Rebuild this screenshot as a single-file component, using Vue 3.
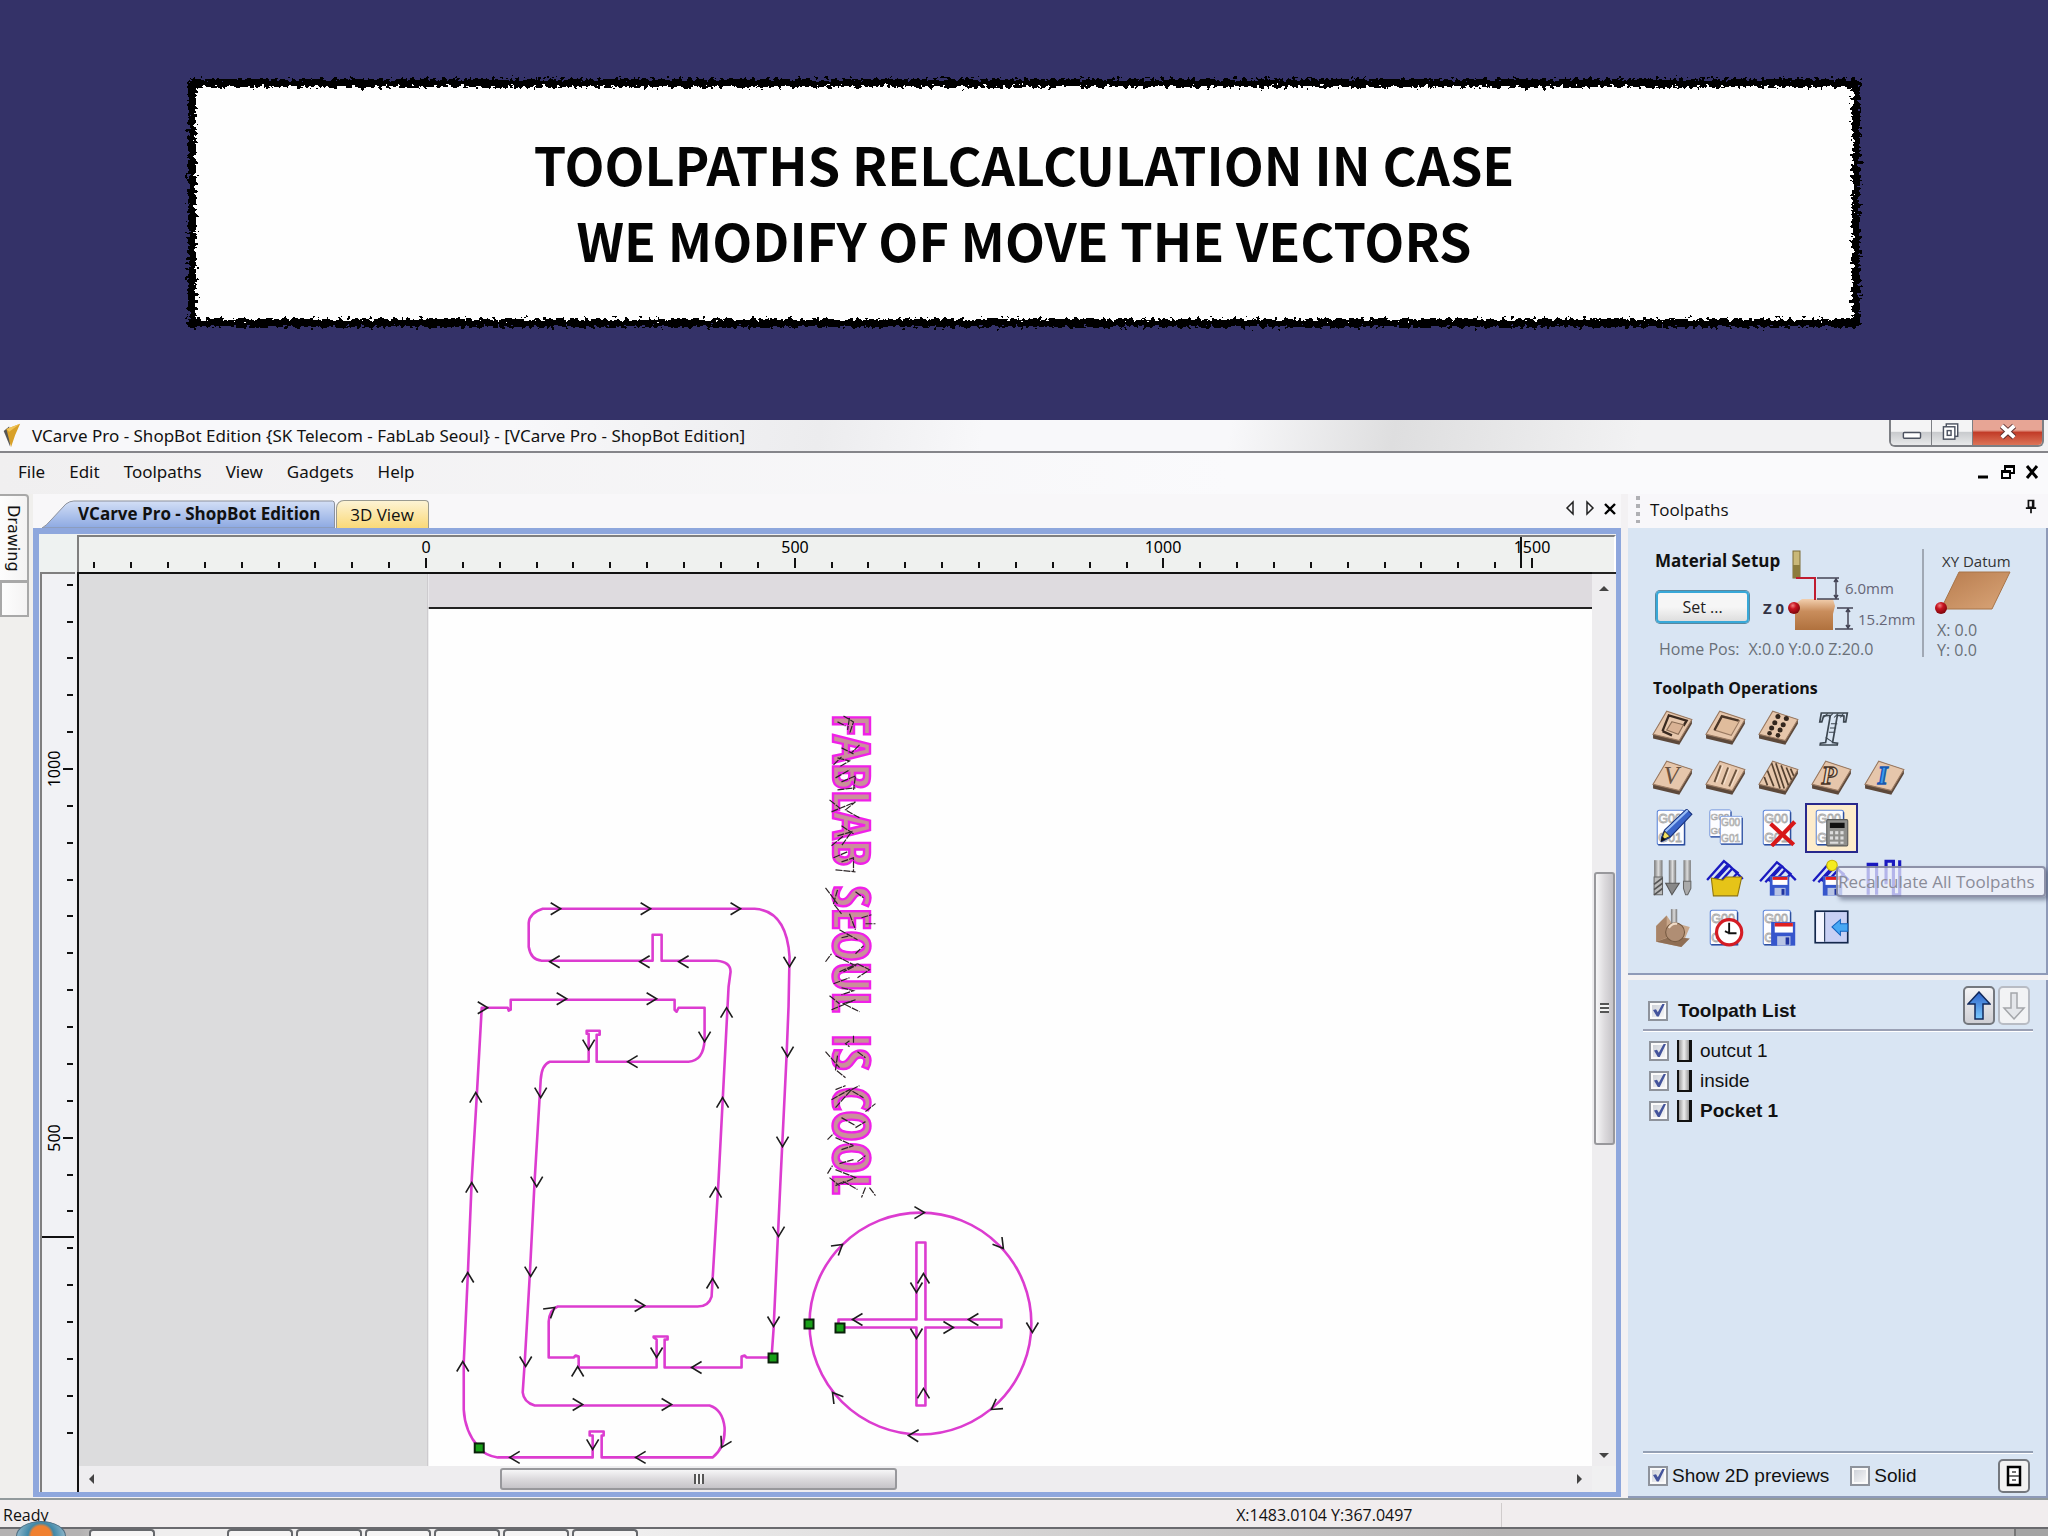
<script setup>
const menus = ['File', 'Edit', 'Toolpaths', 'View', 'Gadgets', 'Help']

const STEP = 36.87
const hTicks = Array.from({ length: 40 }, (_, i) => {
  const n = i - 9
  return { x: Math.round(349 + n * STEP), major: n % 10 === 0, label: n % 10 === 0 ? n * 50 : '' }
})
const vTicks = Array.from({ length: 24 }, (_, i) => {
  const n = 25 - i
  return { y: Math.round(196 + (20 - n) * STEP), major: n % 10 === 0, label: n % 10 === 0 ? n * 50 : '' }
})

const arrows = [
  [561, 909, 0], [651, 909, 0], [741, 909, 0], [488, 1008, 0], [567, 999, 0], [657, 999, 0],
  [645, 1306, 0], [583, 1405, 0], [672, 1405, 0],
  [550, 962, 180], [640, 962, 180], [679, 962, 180], [628, 1062, 180], [692, 1368, 180], [636, 1458, 180], [510, 1458, 180],
  [790, 967, 90], [788, 1057, 90], [783, 1147, 90], [705, 1042, 90], [589, 1050, 90], [541, 1098, 90],
  [537, 1187, 90], [531, 1277, 90], [526, 1367, 90], [779, 1237, 90], [774, 1327, 90], [657, 1358, 90],
  [593, 1450, 90], [722, 1448, 118],
  [476, 1093, -90], [727, 1008, -90], [723, 1098, -90], [472, 1183, -90], [468, 1273, -90], [463, 1362, -90],
  [716, 1188, -90], [713, 1279, -90], [578, 1367, -90], [555, 1308, -38],
  [925, 1213, 0], [1004, 1249, 52], [1033, 1333, 90], [992, 1410, 145], [909, 1436, 182], [833, 1393, -128], [843, 1245, -38],
  [917, 1293, 90], [924, 1274, -90], [853, 1320, 180], [969, 1320, 180], [954, 1328, 0], [917, 1339, 90], [924, 1389, -90],
]
const starts = [[773, 1358], [479, 1448], [809, 1324], [840, 1328]]

const words = [
  { t: 'FABLAB', y: 714 },
  { t: 'SEOUL', y: 886 },
  { t: 'IS', y: 1033 },
  { t: 'COOL', y: 1087 },
]

const items = [
  { name: 'outcut 1', bold: false },
  { name: 'inside', bold: false },
  { name: 'Pocket 1', bold: true },
]
const ops = [
  [['profile', 'Profile'], ['pocket', 'Pocket'], ['drill', 'Drilling'], ['quick', 'Quick Engrave']],
  [['vcarve', 'V-Carve'], ['flute', 'Fluting'], ['texture', 'Texture'], ['prism', 'Prism Carving'], ['inlay', 'Inlay']],
  [['edit', 'Edit Toolpath'], ['copy', 'Duplicate Toolpath'], ['delete', 'Delete Toolpath'], ['recalc', 'Recalculate All']],
  [['tools', 'Tool Database'], ['open', 'Load Template'], ['save', 'Save Template'], ['saveall', 'Save All as Template'], ['merge', 'Merge Toolpaths']],
  [['preview', 'Preview'], ['time', 'Estimate Time'], ['output', 'Save Toolpath'], ['switch', 'Switch to Drawing Tab']],
]
const taskButtons = [89, 227, 296, 365, 434, 503, 572]
</script>

<template>
  <div class="slide">
    <svg class="defs" width="0" height="0" aria-hidden="true">
      <defs>
        <filter id="rough" x="-2%" y="-8%" width="104%" height="116%">
          <feTurbulence type="fractalNoise" baseFrequency="0.22 0.28" numOctaves="2" seed="7" result="n" />
          <feDisplacementMap in="SourceGraphic" in2="n" scale="11" xChannelSelector="R" yChannelSelector="G" />
        </filter>
        <linearGradient id="wood" x1="0" y1="0" x2="1" y2="1">
          <stop offset="0" stop-color="#b87c4e" /><stop offset="1" stop-color="#d9a578" />
        </linearGradient>
        <radialGradient id="ball" cx="0.4" cy="0.3" r="0.7">
          <stop offset="0" stop-color="#f08080" /><stop offset="0.4" stop-color="#c81420" /><stop offset="1" stop-color="#7c060c" />
        </radialGradient>
        <linearGradient id="blueArrow" x1="0" y1="0" x2="0" y2="1">
          <stop offset="0" stop-color="#2c62c8" /><stop offset="1" stop-color="#7ccaff" />
        </linearGradient>
        <linearGradient id="steel" x1="0" y1="0" x2="1" y2="0">
          <stop offset="0" stop-color="#777" /><stop offset="0.5" stop-color="#ddd" /><stop offset="1" stop-color="#777" />
        </linearGradient>
        <symbol id="board" viewBox="0 0 40 36">
          <path d="M1 24 L14 2 L38 10 L38 14 L26 34 L1 28Z" fill="#5c483a" />
          <path d="M1 24 L14 2 L38 10 L26 30Z" fill="#e6c6ab" stroke="#9a7a62" stroke-width="1" />
        </symbol>
        <symbol id="sheet" viewBox="0 0 40 36">
          <rect x="5" y="1" width="26" height="33" rx="2" fill="#fdfdff" stroke="#5f86d8" />
          <path d="M31 3V34H6" fill="none" stroke="#2d4f9e" stroke-width="1.4" />
          <text x="6" y="13" font-size="12" fill="#fff" stroke="#aaa" stroke-width="0.8" font-family="Liberation Sans, sans-serif">G00</text>
          <text x="6" y="31" font-size="12" fill="#fff" stroke="#aaa" stroke-width="0.8" font-family="Liberation Sans, sans-serif">G01</text>
        </symbol>
        <symbol id="floppy" viewBox="0 0 20 20">
          <rect x="0" y="0" width="20" height="20" fill="#3656cc" />
          <rect x="3" y="1" width="15" height="8" fill="#fff" /><rect x="3" y="1" width="15" height="3" fill="#e02020" />
          <rect x="5" y="12" width="11" height="8" fill="#b8c4e4" /><rect x="12" y="13" width="3" height="6" fill="#2034a0" />
        </symbol>
        <symbol id="paths" viewBox="0 0 40 24">
          <path d="M2 20L18 2L23 6L10 20M16 20L26 9L31 13L25 20M23 6L36 19M7 21L21 6" fill="none" stroke="#1a1ac0" stroke-width="2.2" />
        </symbol>
        <symbol id="i-profile" viewBox="0 0 40 36"><use href="#board" /><path d="M10 21 L16 6 L33 11 L30 16 M10 21 L19 25" fill="none" stroke="#3a2a20" stroke-width="2.2" /><path d="M19 12 L30 15 L25 24 L14 20Z" fill="#d9b294" stroke="#8a6c54" /></symbol>
        <symbol id="i-pocket" viewBox="0 0 40 36"><use href="#board" /><path d="M9 20 L16 6 L33 11 L25 25Z" fill="#e0bc9c" stroke="#9a7a62" /><path d="M9 20 L16 7 L32 11" fill="none" stroke="#4a3628" stroke-width="2.2" /></symbol>
        <symbol id="i-drill" viewBox="0 0 40 36"><use href="#board" /><g fill="#33261d"><circle cx="19" cy="7" r="2.4" /><circle cx="27" cy="9" r="2.4" /><circle cx="16" cy="13" r="2.4" /><circle cx="24" cy="15" r="2.4" /><circle cx="13" cy="18" r="2.4" /><circle cx="21" cy="20" r="2.4" /><circle cx="11" cy="23" r="2.2" /><circle cx="19" cy="25" r="2.2" /></g></symbol>
        <symbol id="i-quick" viewBox="0 0 40 36"><text x="5" y="34" font-size="46" font-weight="700" font-style="italic" fill="#d9e5f3" stroke="#3c4650" stroke-width="1.6" font-family="Liberation Serif, serif">T</text><path d="M12 8L16 4M17 8L21 4M22 8L26 4M28 8L31 4M19 14H25M18 18H24M17 22H23M14 27L20 31" stroke="#3c4650" fill="none" /></symbol>
        <symbol id="i-vcarve" viewBox="0 0 40 36"><use href="#board" /><text x="11" y="24" font-size="24" font-style="italic" fill="#6a5240" font-family="Liberation Serif, serif">V</text></symbol>
        <symbol id="i-flute" viewBox="0 0 40 36"><use href="#board" /><path d="M9 22 L15 6 M16 24 L22 8 M23 26 L30 10" stroke="#6c543f" stroke-width="1.8" /><path d="M11 22 L17 6 M18 24 L24 8 M25 26 L32 10" stroke="#f6e2d0" stroke-width="1" /></symbol>
        <symbol id="i-texture" viewBox="0 0 40 36"><use href="#board" /><path d="M13 4 L21 28 M17 4 L25 28 M22 6 L29 25 M27 8 L32 20 M9 11 L15 26 M31 9L34 16 M6 17L9 25" stroke="#54402f" stroke-width="1.6" /></symbol>
        <symbol id="i-prism" viewBox="0 0 40 36"><use href="#board" /><text x="10" y="24" font-size="24" font-weight="700" font-style="italic" fill="#f0d8c2" stroke="#4a3628" stroke-width="1.2" font-family="Liberation Serif, serif">P</text></symbol>
        <symbol id="i-inlay" viewBox="0 0 40 36"><use href="#board" /><text x="13" y="24" font-size="24" font-weight="700" font-style="italic" fill="#3c9cf0" stroke="#1858b0" stroke-width="1.4" font-family="Liberation Serif, serif">I</text></symbol>
        <symbol id="i-edit" viewBox="0 0 40 36"><use href="#sheet" /><path d="M9 27 L12 20 L33 0 L38 5 L17 27 L9 31Z" fill="#3a64c8" stroke="#16307c" /><path d="M13 21 L34 1" stroke="#9cc0f8" stroke-width="2" /><path d="M9 30 L12 21 L17 26Z" fill="#f4e060" stroke="#222" stroke-width="0.8" /><path d="M8 31l2-5 3 3z" fill="#111" /></symbol>
        <symbol id="i-copy" viewBox="0 0 40 36"><svg x="0" y="0" width="34" height="28" viewBox="4 0 34 36"><use href="#sheet" width="40" height="36" /></svg><svg x="10" y="6" width="30" height="29" viewBox="0 0 36 36"><use href="#sheet" width="40" height="36" /></svg></symbol>
        <symbol id="i-delete" viewBox="0 0 40 36"><use href="#sheet" /><path d="M12 14 L34 34 M35 12 L13 35" stroke="#d81818" stroke-width="4" /></symbol>
        <symbol id="i-recalc" viewBox="0 0 40 36"><use href="#sheet" /><rect x="15" y="10" width="20" height="25" rx="1" fill="#8f8f8c" stroke="#5a5a58" /><rect x="18" y="13" width="14" height="5" fill="#111" /><g fill="#ddd"><rect x="18" y="21" width="3" height="3" /><rect x="23" y="21" width="3" height="3" /><rect x="28" y="21" width="3" height="3" /><rect x="18" y="26" width="3" height="3" /><rect x="23" y="26" width="3" height="3" /><rect x="28" y="26" width="3" height="3" /><rect x="18" y="31" width="8" height="2" /><rect x="28" y="31" width="3" height="2" /></g></symbol>
        <symbol id="i-tools" viewBox="0 0 40 36"><rect x="2" y="1" width="8" height="16" fill="url(#steel)" /><path d="M2 17h8v17H2z" fill="#bbb" stroke="#666" /><path d="M2 24l8-6M2 29l8-6M2 34l8-6" stroke="#555" stroke-width="1.6" /><rect x="16" y="1" width="7" height="22" fill="url(#steel)" /><path d="M13 23H26L19 34Z" fill="#888" stroke="#555" /><rect x="30" y="1" width="7" height="20" fill="url(#steel)" /><path d="M30 21h7v7l-3 6h-2l-2-6z" fill="#aaa" stroke="#666" /></symbol>
        <symbol id="i-open" viewBox="0 0 40 36"><use href="#paths" width="40" height="24" /><path d="M6 18 L17 20 L20 17 L35 17 L31 35 L8 35Z" fill="#e6c418" stroke="#907408" /></symbol>
        <symbol id="i-save" viewBox="0 0 40 36"><use href="#paths" y="1" width="40" height="24" /><use href="#floppy" x="11" y="16" width="19" height="19" /></symbol>
        <symbol id="i-saveall" viewBox="0 0 40 36"><use href="#paths" y="1" width="40" height="24" /><circle cx="20" cy="6" r="5" fill="#f4ec20" stroke="#c8b400" /><use href="#floppy" x="11" y="16" width="19" height="19" /></symbol>
        <symbol id="i-merge" viewBox="0 0 40 36"><path d="M4 34 V5 H12 V34 M21 24 V2 H28 V34 H34 V1" fill="none" stroke="#1a1ac0" stroke-width="3" /></symbol>
        <symbol id="i-preview" viewBox="0 0 40 36"><path d="M4 16 L14 6 L18 12 L36 17 L28 36 L4 31Z" fill="#c9a88c" /><path d="M4 16L14 6V27L4 31Z" fill="#a88468" /><path d="M4 31L18 26L36 28L28 36Z" fill="#8f6e54" /><rect x="18" y="0" width="6" height="18" fill="url(#steel)" /><circle cx="22" cy="22" r="9" fill="#b08e74" stroke="#74583f" /><path d="M16 18q3-5 8-4" stroke="#f0dcc8" stroke-width="2" fill="none" /></symbol>
        <symbol id="i-time" viewBox="0 0 40 36"><use href="#sheet" /><circle cx="23" cy="22" r="12" fill="#fff" stroke="#d41c24" stroke-width="3" /><path d="M23 13v10h7M23 23l-4-2" stroke="#111" stroke-width="1.8" fill="none" /></symbol>
        <symbol id="i-output" viewBox="0 0 40 36"><use href="#sheet" /><use href="#floppy" x="12" y="12" width="24" height="23" /></symbol>
        <symbol id="i-switch" viewBox="0 0 40 36"><rect x="4" y="2" width="31" height="30" fill="#c8d0f4" stroke="#14284c" stroke-width="1.6" /><rect x="5" y="3" width="8" height="28" fill="#f4f6ff" /><path d="M13 3v28" stroke="#14284c" /><path d="M20 17 L28 10 V14 H35 V21 H28 V25Z" fill="#48a8f4" stroke="#1464c0" /></symbol>
      </defs>
    </svg>

    <header class="banner">
      <h1 class="card">
        <span>TOOLPATHS RELCALCULATION IN CASE</span>
        <span>WE MODIFY OF MOVE THE VECTORS</span>
      </h1>
    </header>

    <div class="window">
      <div class="titlebar">
        <svg class="logo" viewBox="0 0 22 34"><path d="M3 12 L9 7 L10 29Z" fill="#555" /><path d="M6 10 L21 4 Q15 16 11 30Z" fill="#d8a028" /><path d="M6 10l3 3 12-9z" fill="#f0c458" /></svg>
        <span class="caption">VCarve Pro - ShopBot Edition {SK Telecom - FabLab Seoul} - [VCarve Pro - ShopBot Edition]</span>
        <div class="winbtns">
          <button class="wb" aria-label="Minimize"><svg viewBox="0 0 42 26"><rect x="13" y="13" width="18" height="6" rx="1" fill="#fff" stroke="#4c5260" stroke-width="1.5" /></svg></button>
          <button class="wb" aria-label="Restore"><svg viewBox="0 0 42 26"><rect x="15" y="4" width="12" height="13" fill="#fff" stroke="#4c5260" stroke-width="1.5" /><rect x="12" y="7" width="12" height="13" fill="#fff" stroke="#4c5260" stroke-width="1.5" /><rect x="16" y="11" width="4" height="5" fill="none" stroke="#4c5260" stroke-width="1.5" /></svg></button>
          <button class="wb close" aria-label="Close"><svg viewBox="0 0 70 26"><path d="M29 6L42 18M42 6L29 18" stroke="#5c3030" stroke-width="6" /><path d="M29 6L42 18M42 6L29 18" stroke="#fff" stroke-width="4" /></svg></button>
        </div>
      </div>

      <nav class="menubar">
        <button v-for="m in menus" :key="m" class="menu">{{ m }}</button>
        <div class="mdi">
          <button aria-label="Minimize document"><svg viewBox="0 0 14 16"><path d="M1 13H11" stroke="#000" stroke-width="3" /></svg></button>
          <button aria-label="Restore document"><svg viewBox="0 0 14 16"><path d="M4 6V2H13V9H10M4 3H13" fill="none" stroke="#000" stroke-width="2" /><rect x="1" y="7" width="8" height="7" fill="none" stroke="#000" stroke-width="2" /><path d="M1 8H9" stroke="#000" stroke-width="2" /></svg></button>
          <button aria-label="Close document"><svg viewBox="0 0 14 16"><path d="M2 2L12 14M12 2L2 14" stroke="#000" stroke-width="3" /></svg></button>
        </div>
      </nav>

      <div class="workspace">
        <div class="sidetabs">
          <button class="side">Drawing</button>
          <button class="side blank" aria-label="More tabs"></button>
        </div>

        <main class="doc">
          <div class="tabs">
            <button class="tab active"><svg class="tabshape" viewBox="0 0 295 28" preserveAspectRatio="none"><defs><linearGradient id="tb" x1="0" y1="0" x2="0" y2="1"><stop offset="0" stop-color="#d3dff6" /><stop offset="1" stop-color="#8da9e2" /></linearGradient></defs><path d="M0 28 Q4 26 10 19 L24 4 Q28 1 32 1 H292 Q294 1 294 4 V28Z" fill="url(#tb)" stroke="#8c919c" /></svg><span>VCarve Pro - ShopBot Edition</span></button>
            <button class="tab view3d">3D View</button>
            <div class="tabnav">
              <button aria-label="Previous tab"><svg viewBox="0 0 14 16"><path d="M10 2V14L4 8Z" fill="none" stroke="#222" stroke-width="1.5" /></svg></button>
              <button aria-label="Next tab"><svg viewBox="0 0 14 16"><path d="M4 2V14L10 8Z" fill="none" stroke="#222" stroke-width="1.5" /></svg></button>
              <button aria-label="Close tab"><svg viewBox="0 0 14 16"><path d="M2 4L12 14M12 4L2 14" stroke="#000" stroke-width="2.4" /></svg></button>
            </div>
          </div>

          <div class="frame">
            <div class="corner"></div>
            <div class="hruler">
              <svg>
                <g v-for="t in hTicks" :key="t.x">
                  <path :d="`M${t.x} ${t.major ? 22 : 26}V32`" stroke="#111" stroke-width="2" />
                  <text v-if="t.major" :x="t.x" y="17" text-anchor="middle">{{ t.label }}</text>
                </g>
                <path d="M1444 1V32" stroke="#111" stroke-width="2" />
              </svg>
            </div>
            <div class="vruler">
              <svg>
                <g v-for="t in vTicks" :key="t.y">
                  <path :d="`M${t.major ? 23 : 27} ${t.y}H33`" stroke="#111" stroke-width="2" />
                  <text v-if="t.major" :transform="`translate(20 ${t.y}) rotate(-90)`" text-anchor="middle">{{ t.label }}</text>
                </g>
                <path d="M2 664H34" stroke="#111" stroke-width="2" />
              </svg>
            </div>
            <div class="canvas">
              <svg class="drawing" viewBox="79 574 1514 893" preserveAspectRatio="xMinYMin slice">
                <rect x="79" y="574" width="349" height="893" fill="#dcdcdd" />
                <rect x="429" y="574" width="1164" height="34" fill="#dedbdf" />
                <rect x="429" y="608" width="1164" height="859" fill="#fefefe" />
                <path d="M428 574V1467" stroke="#c4c2c6" />
                <path d="M429 608H1593" stroke="#222" stroke-width="2" />
                <g>
                  <path class="line" d="M772 1358 L774 1330 L781 1180 L787 1057 L789 1007 L790 957 Q787 911 755 909 H543 Q530 913 529 923 V947 Q531 960 542 961 H653 V935 H662 V961 H717 Q731 962 731 972 L729 987 L719 1180 L713 1280 L712 1297 Q709 1307 698 1307 H558 Q550 1310 549 1322 V1358 H574 L576 1356 L579 1357 V1368 H657 V1340 L654 1338 V1337 H668 V1340 H665 V1368 H742 V1357 L745 1356 L747 1358Z" />
                  <path class="line" d="M479 1448 Q465 1432 464 1410 V1363 L468 1277 L472 1180 L477 1097 L482 1008 H508 L509 1011 L511 1010 V1000 H675 V1010 L677 1012 L679 1008 H705 V1040 Q704 1061 689 1062 H597 V1035 H600 V1031 H587 V1034 H589 V1062 H550 Q542 1065 541 1080 L535 1180 L530 1277 L525 1363 L523 1393 Q524 1403 535 1406 H710 Q723 1410 725 1428 Q726 1448 713 1458 H602 V1436 H604 V1432 H590 V1436 H593 V1458 H498 Q485 1456 479 1448Z" />
                  <circle class="line" cx="921" cy="1324" r="111" />
                  <path class="line" d="M839 1320 H917 V1243 H926 V1320 H1002 V1328 H926 V1406 H917 V1328 H839Z" />
                </g>
                <text v-for="w in words" :key="w.t" class="carved" :transform="`translate(833 ${w.y}) rotate(90)`">{{ w.t }}</text>
                <path class="scribble" d="M844 716l10 6-4 12M850 718l-2 12M838 722l8 4M842 748l12 6M838 758l12 3-10 6M834 765l8-8M860 745l-8 8M836 778l14-8M842 782l14-6-2 14M838 790l18-2M830 800l10 8M832 812l24-10-10 8 14 8M842 826l12 8M838 836l14-4-10 14M832 846l12-10M834 858l14-6M842 862l12-4v14M836 870l20 2M826 888l12 16M838 890l-4 14 8 10M856 892l8 6M850 914l6 16M862 918l10-3M866 924h10M840 930l18 10M842 938l8-2M856 954l8-8M836 956l20 10-12 6M826 962l6-8M858 964l12 6-12 8M840 972l18-8M834 984l16-6M842 988l12 3-12 4M830 996l10 8M832 1010l24-10-12 4 16 8M854 1036v8M850 1041l-4 3 4 3M826 1052l14 16M858 1052l8 6M838 1056l-2 14 10 8M836 1090l10-4M832 1100l18-10 14 8M836 1108l16-18M866 1112l10-8M852 1090l8-4M842 1118l14 8M856 1128l10-6M836 1138l18 8M828 1140l6-6M842 1150l12-4M840 1164l14-4M858 1162l8-6M836 1170l20 8-14 6M828 1174l5-8M830 1178l10 8M836 1186l8-4 14 8M866 1188l-4 10M870 1188l6 8" />
                <g v-for="(a, i) in arrows" :key="i" :transform="`translate(${a[0]} ${a[1]}) rotate(${a[2]})`">
                  <path class="arrow" d="M-10 -6 L0 0 L-10 6" />
                </g>
                <rect v-for="(s, i) in starts" :key="'s' + i" class="start" :x="s[0] - 4" :y="s[1] - 4" width="9" height="9" />
              </svg>
            </div>
            <div class="vscroll">
              <svg viewBox="0 0 10 6"><path d="M0 5L5 0L10 5Z" fill="#444" /></svg>
              <div class="vthumb"></div>
              <svg viewBox="0 0 10 6"><path d="M0 0L5 5L10 0Z" fill="#444" /></svg>
            </div>
            <div class="hscroll">
              <svg viewBox="0 0 6 10"><path d="M5 0L0 5L5 10Z" fill="#444" /></svg>
              <div class="hthumb"></div>
              <svg viewBox="0 0 6 10"><path d="M0 0L5 5L0 10Z" fill="#444" /></svg>
            </div>
            <div class="scorner"></div>
          </div>
        </main>

        <aside class="panel">
          <div class="phead">
            <span class="grip"></span>
            <h2>Toolpaths</h2>
            <button class="pin" aria-label="Pin panel"><svg viewBox="0 0 14 16"><path d="M4 1H10V9H4ZM1 10H13M7 10V16M9 1V9" fill="none" stroke="#111" stroke-width="2" /></svg></button>
          </div>
          <section class="pbox top">
            <div class="material">
              <div class="mat">
                <div class="matrow">
                  <div class="matleft">
                    <h3>Material Setup</h3>
                    <button class="set">Set ...</button>
                  </div>
                  <svg class="diagram" viewBox="1755 549 165 86">
                    <rect x="1793" y="551" width="7" height="27" fill="#c9b878" stroke="#7c6c38" />
                    <rect x="1793" y="565" width="7" height="13" fill="#8c7c3c" />
                    <defs><linearGradient id="blk" x1="0" y1="0" x2="0" y2="1"><stop offset="0" stop-color="#f2cfae" /><stop offset="0.4" stop-color="#c98d5c" /><stop offset="1" stop-color="#b0713e" /></linearGradient></defs>
                    <path d="M1795 604L1802 599H1833L1835 606L1833 614V630H1795Z" fill="url(#blk)" />
                    <path d="M1796 578H1815V600" fill="none" stroke="#c01c30" stroke-width="2" />
                    <path d="M1817 578H1839M1817 599H1839M1836 579V598M1834 582L1836 579L1838 582M1834 595L1836 598L1838 595M1837 608H1853M1835 629H1853M1848 609V628M1846 612L1848 609L1850 612M1846 625L1848 628L1850 625" fill="none" stroke="#445" stroke-width="1.5" />
                    <circle cx="1794" cy="608" r="6" fill="url(#ball)" />
                    <text class="z" x="1763" y="614">Z 0</text>
                    <text x="1845" y="594">6.0mm</text>
                    <text x="1858" y="625">15.2mm</text>
                  </svg>
                </div>
                <div class="home"><span>Home Pos:</span><span>X:0.0 Y:0.0 Z:20.0</span></div>
              </div>
              <div class="datum">
                <span class="dt">XY Datum</span>
                <svg viewBox="0 0 76 45"><path d="M24 3H75L57 40H6Z" fill="url(#wood)" stroke="#a87448" /><circle cx="6" cy="39" r="6" fill="url(#ball)" /></svg>
                <span class="xy">X: 0.0</span>
                <span class="xy">Y: 0.0</span>
              </div>
            </div>
            <h3 class="opstitle">Toolpath Operations</h3>
            <div class="ops">
              <div v-for="(row, r) in ops" :key="r" class="oprow">
                <button v-for="o in row" :key="o[0]" class="op" :class="{ on: o[0] === 'recalc' }" :aria-label="o[1]">
                  <svg><use :href="'#i-' + o[0]" /></svg>
                </button>
              </div>
              <div class="tip" role="tooltip">Recalculate All Toolpaths</div>
            </div>
          </section>
          <section class="pbox list">
            <div class="lhead">
              <label class="ck bold"><input type="checkbox" checked /><span>Toolpath List</span></label>
              <button class="mv" aria-label="Move up"><svg viewBox="0 0 24 30"><path d="M12 1L23 13H16V28H8V13H1Z" fill="url(#blueArrow)" stroke="#10285c" stroke-width="1.5" /></svg></button>
              <button class="mv off" aria-label="Move down" disabled><svg viewBox="0 0 24 30"><path d="M12 28L22 17H15V2H9V17H2Z" fill="#e4e6ea" stroke="#a4a6aa" stroke-width="1.5" /></svg></button>
            </div>
            <ul>
              <li v-for="it in items" :key="it.name">
                <label class="ck" :class="{ bold: it.bold }"><input type="checkbox" checked /><span class="bit"></span><span>{{ it.name }}</span></label>
              </li>
            </ul>
            <div class="lfoot">
              <label class="ck"><input type="checkbox" checked /><span>Show 2D previews</span></label>
              <label class="ck"><input type="checkbox" /><span>Solid</span></label>
              <button class="mv cab" aria-label="Toolpath layout"><svg viewBox="0 0 16 22"><rect x="2" y="2" width="12" height="18" fill="#fff" stroke="#000" stroke-width="2.5" /><path d="M3 11H13M6 7H10M6 15H10" stroke="#444" stroke-width="1.5" /></svg></button>
            </div>
          </section>
        </aside>
      </div>

      <footer class="status">
        <span class="ready">Ready</span>
        <span class="coords">X:1483.0104 Y:367.0497</span>
      </footer>
      <div class="taskbar">
        <span class="orb"></span>
        <span v-for="t in taskButtons" :key="t" class="tk" :style="{ left: t + 'px' }"></span>
        <span class="desk"></span>
      </div>
    </div>
  </div>
</template>

<style>
body { background: #343268; }
</style>

<style scoped>
.slide { min-height: 100vh; display: flex; flex-direction: column; background: #343268; font-family: "Open Sans", "Noto Sans", sans-serif; font-size: 16px; color: #111; overflow: hidden; }
.slide *, .slide *::before, .slide *::after { box-sizing: border-box; }
.defs { position: absolute; }
button { font: inherit; color: inherit; background: none; border: 0; padding: 0; margin: 0; display: block; }
svg { display: block; }
h1, h2, h3, ul { margin: 0; padding: 0; font-weight: 400; font-size: inherit; list-style: none; }

.banner { height: 420px; padding: 78px 187px 92px; }
.card { position: relative; height: 100%; display: flex; flex-direction: column; align-items: center; justify-content: center; padding-bottom: 2px; font-family: "Noto Sans CJK KR", "Noto Sans CJK JP", sans-serif; font-weight: 700; font-size: 52px; line-height: 76px; color: #040404; }
.card::before { content: ""; position: absolute; inset: 1px; border: 8px solid #000; background: #fefefe; filter: url(#rough); }
.card span { position: relative; white-space: nowrap; }

.window { flex: 1; display: flex; flex-direction: column; background: #f3f1f3; }
.titlebar { height: 33px; display: flex; background: linear-gradient(100deg, #f8f8fa 0 25%, #ececee 40%, #f8f8fa 48% 60%, #dededf 68%, #f2f2f3 80%); border-bottom: 2px solid #85858a; }
.logo { width: 22px; height: 31px; }
.caption { flex: 1; padding-left: 10px; font-family: "Noto Sans", sans-serif; font-size: 17px; line-height: 31px; white-space: nowrap; }
.winbtns { display: flex; height: 27px; margin-right: 4px; border: 2px solid #7d7f84; border-top: 0; border-radius: 0 0 6px 6px; overflow: hidden; }
.wb { width: 41px; height: 25px; background: linear-gradient(#f4f4f5 45%, #c9cbce 50%, #e8e9ea); border-right: 1px solid #7d7f84; }
.wb svg { width: 100%; height: 100%; }
.wb.close { width: 69px; border: 0; background: linear-gradient(#e7a595 40%, #c23c28 50%, #dc7458); }

.menubar { height: 41px; display: flex; align-items: center; padding: 0 9px 4px 18px; gap: 24px; background: linear-gradient(90deg, #f0eff0, #fafafc 60%); }
.menu { font-family: "Noto Sans", sans-serif; font-size: 17px; line-height: 24px; }
.mdi { margin-left: auto; display: flex; gap: 10px; }
.mdi button, .tabnav button { width: 14px; height: 16px; }

.workspace { flex: 1; display: flex; }
.sidetabs { width: 33px; background: #f0efed; }
.side { width: 29px; height: 88px; border: 2px solid #a8a8a8; border-left: 0; border-radius: 0 4px 0 0; background: linear-gradient(90deg, #fdfdfd, #f4f3f3); writing-mode: vertical-rl; font-family: "DejaVu Sans", sans-serif; font-size: 16px; line-height: 25px; }
.side.blank { height: 36px; margin-top: -1px; border-radius: 0; border-left: 2px solid #a8a8a8; }

.doc { flex: 1; min-width: 0; display: flex; flex-direction: column; }
.tabs { height: 34px; display: flex; align-items: flex-end; background: #f8f7f9; }
.tab { position: relative; height: 28px; white-space: nowrap; font-size: 17px; line-height: 26px; }
.tab.active { margin-left: 9px; padding: 0 15px 0 36px; font-weight: 700; }
.tabshape { position: absolute; inset: 0; width: 100%; height: 100%; }
.tab span { position: relative; }
.tab.view3d { width: 93px; border: 1px solid #9a9a90; border-bottom: 0; border-radius: 8px 4px 0 0; background: linear-gradient(#fdf3d4, #fad978); }
.tabnav { margin-left: auto; display: flex; gap: 6px; padding: 0 4px 12px 0; }
.frame { flex: 1; display: grid; grid-template-columns: 38px minmax(0, 1fr) 24px; grid-template-rows: 38px minmax(0, 1fr) 26px; border: 6px solid #8ea7dd; border-right-width: 5px; border-bottom-width: 5px; margin-bottom: 1px; background: #f0f0f1; }
.corner { background: #eef2f1; }
.hruler, .vruler { position: relative; background: #eff1ef; overflow: hidden; font-family: "Noto Sans", sans-serif; font-size: 16px; }
.hruler { grid-column: 2 / 4; border-top: 2px solid #7f7f7f; border-left: 2px solid #7f7f7f; border-right: 2px solid #fff; margin-top: 1px; }
.vruler { grid-row: 2 / 4; border-left: 2px solid #7f7f7f; border-top: 2px solid #7f7f7f; margin: 0 2px 0 1px; background: #f1f2f5; }
.hruler svg, .vruler svg { position: absolute; left: -2px; top: -1px; width: 100%; height: 100%; overflow: visible; }
.canvas { position: relative; border-left: 2px solid #111; border-top: 2px solid #111; overflow: hidden; background: #fefefe; }
.drawing { position: absolute; inset: 0; width: 100%; height: 100%; }
.line { fill: none; stroke: #dc3cd0; stroke-width: 2.6; stroke-linejoin: round; }
.arrow { fill: none; stroke: #1c1c1c; stroke-width: 1.6; }
.scribble { fill: none; stroke: #2c2426; stroke-width: 1.2; stroke-dasharray: 7 1; }
.start { fill: #18a018; stroke: #0a200a; stroke-width: 2; }
.carved { font-family: "Open Sans Condensed", "Roboto Condensed", "Noto Sans Condensed", "DejaVu Sans Condensed", sans-serif; font-weight: 700; font-size: 53px; fill: #c9909a; stroke: #f020e8; stroke-width: 2.4; }

.vscroll, .hscroll { display: flex; align-items: center; background: #eeedef; }
.vscroll { flex-direction: column; padding: 12px 0 7px; border-top: 2px solid #222; }
.vscroll svg { width: 10px; height: 6px; }
.hscroll { padding: 0 9px 0 10px; border-left: 2px solid #111; }
.hscroll svg { width: 6px; height: 10px; }
.vthumb, .hthumb { border: 2px solid #98989c; border-radius: 3px; position: relative; }
.vthumb { width: 21px; height: 31.3%; margin: auto 0; top: -14px; background: linear-gradient(90deg, #f6f6f7, #dcdadd 50%, #c6c4c8); }
.hthumb { width: 26.6%; height: 22px; margin-left: 27.1%; margin-right: auto; background: linear-gradient(#f6f6f7, #dcdadd 50%, #c6c4c8); }
.vthumb::after { content: ""; position: absolute; left: 4px; top: calc(50% - 5px); width: 9px; height: 10px; background: repeating-linear-gradient(#555 0 2px, #f4f4f4 2px 4px); }
.hthumb::after { content: ""; position: absolute; top: 4px; left: calc(50% - 5px); width: 10px; height: 10px; background: repeating-linear-gradient(90deg, #555 0 2px, #f4f4f4 2px 4px); }

.panel { width: 420px; margin-left: 7px; display: flex; flex-direction: column; }
.phead { height: 34px; display: flex; align-items: center; padding: 0 11px 4px 8px; background: #f8f7fa; }
.grip { width: 4px; height: 27px; background: repeating-linear-gradient(#b0b0b4 0 4px, transparent 4px 8px); }
.phead h2 { padding-left: 10px; font-size: 17px; }
.pin { margin-left: auto; width: 12px; height: 15px; margin-bottom: 6px; }
.pin svg { width: 12px; height: 15px; }
.pbox { background: #d9e5f3; border: 2px solid #8e9ab8; border-top: 0; border-left: 0; }
.top { height: 447px; }
.material { display: flex; height: 132px; padding: 21px 0 0 27px; color: #555; font-size: 16px; }
.mat { width: 269px; height: 108px; border-right: 2px solid #a0a8b4; }
.matrow { display: flex; height: 86px; }
.matleft { width: 100px; }
.matleft h3 { font-weight: 700; line-height: 24px; white-space: nowrap; color: #111; font-size: 17px; }
.set { width: 93px; height: 32px; margin-top: 18px; margin-left: 1px; border: 2px solid #38a8d8; border-radius: 4px; background: linear-gradient(#f6f6f6 50%, #dedede); color: #222; box-shadow: 0 0 0 1px #5888a0; }
.diagram { width: 165px; height: 86px; font-size: 15px; fill: #667; }
.z { font-weight: 700; fill: #334; }
.home { display: flex; gap: 9px; padding-left: 4px; line-height: 28px; font-size: 16px; color: #6a7078; white-space: nowrap; }
.datum { padding-left: 13px; display: flex; flex-direction: column; }
.datum .dt { padding-left: 5px; line-height: 24px; font-size: 15px; color: #333; white-space: nowrap; height: 20px; }
.datum svg { width: 76px; height: 45px; margin-left: -2px; margin-bottom: 6px; }
.xy { font-size: 16px; line-height: 20px; color: #6a7078; }
.opstitle { margin: 14px 0 0 25px; font-weight: 700; font-size: 16px; line-height: 28px; color: #111; }
.ops { position: relative; margin-top: 1px; padding: 0 0 0 18px; }
.oprow { display: flex; height: 50px; }
.op { width: 53px; height: 50px; padding: 4px; border: 2px solid transparent; }
.op svg { width: 42px; height: 38px; }
.op.on { border-color: #28288c; background: #fdeccb; }
.tip { position: absolute; left: 208px; top: 163px; width: 210px; height: 31px; border: 2px solid rgba(110, 114, 140, 0.75); border-radius: 4px; background: rgba(240, 241, 250, 0.72); color: #8a8c98; font-size: 17px; line-height: 27px; white-space: nowrap; box-shadow: 3px 3px 4px rgba(60, 70, 100, 0.5); }

.list { flex: 1; margin-top: 5px; padding: 6px 13px 0 15px; display: flex; flex-direction: column; font-family: "Liberation Sans", Arial, sans-serif; font-size: 19px; }
.lhead { display: flex; align-items: center; height: 45px; padding: 0 3px 4px 5px; gap: 3px; border-bottom: 2px solid #9aa0b4; box-shadow: 0 1px #fff; }
.lhead .ck { flex: 1; padding-top: 10px; }
.ck { display: flex; align-items: center; gap: 10px; white-space: nowrap; }
.bold { font-weight: 700; }
.ck input { appearance: none; margin: 0; width: 20px; height: 20px; border: 2px solid #8e939c; background: linear-gradient(135deg, #c8ccd4, #fbfbfc); box-shadow: inset 0 0 0 2px #fafafa; position: relative; }
.ck input:checked::before { content: ""; position: absolute; left: 3px; top: 1px; width: 12px; height: 13px; background: #44549c; clip-path: polygon(0 50%, 25% 45%, 40% 68%, 80% 0, 100% 0, 48% 100%, 32% 100%); }
.mv { width: 32px; height: 39px; display: flex; align-items: center; justify-content: center; border: 2px solid #74787e; border-radius: 5px; background: linear-gradient(#f4f4f6, #cfcfd4); }
.mv svg { width: 24px; height: 30px; }
.mv.off { border-color: #b8bcc4; background: #f2f3f5; }
.list ul { padding: 5px 0 0 6px; }
.list li { height: 30px; display: flex; align-items: center; }
.list li .ck { gap: 8px; }
.bit { width: 15px; height: 22px; border: 2px solid #111; border-top: 0; border-right-width: 3px; background: linear-gradient(90deg, #999, #eee, #999); }
.lfoot { margin-top: auto; height: 45px; display: flex; align-items: center; padding: 2px 3px 0 5px; border-top: 2px solid #94a0b4; box-shadow: inset 0 1px #fff; gap: 21px; }
.lfoot .ck { gap: 4px; }
.cab { margin-left: auto; height: 34px; background: #f2f2f2; }
.cab svg { width: 16px; height: 22px; }

.status { height: 29px; display: flex; align-items: center; border-top: 2px solid #929a9c; background: #f1edee; padding: 2px 0 0 3px; font-size: 16px; }
.ready { width: 60.3%; }
.coords { width: 266px; border-right: 1px solid #d0cccc; line-height: 24px; }
.taskbar { position: relative; height: 9px; background: linear-gradient(90deg, #b4b2b2 0 80px, #efeeee 160px 640px, #b4b2b2 1500px); border-top: 2px solid #6a6a6e; overflow: visible; }
.tk { position: absolute; top: 0; width: 66px; height: 7px; border: 2px solid #66686c; border-bottom: 0; border-radius: 4px 4px 0 0; background: #f5f4f4; }
.orb { position: absolute; left: 16px; top: -8px; width: 50px; height: 15px; border-radius: 25px 25px 0 0 / 15px 15px 0 0; background: radial-gradient(circle at 50% 100%, #f08030 0 10px, #3f88a8 13px, #8cb4c8 24px); border: 1px solid #4c6c80; border-bottom: 0; }
.desk { position: absolute; right: 0; top: 0; width: 34px; height: 7px; border-left: 2px solid #777; background: #a4a4a4; }
</style>
